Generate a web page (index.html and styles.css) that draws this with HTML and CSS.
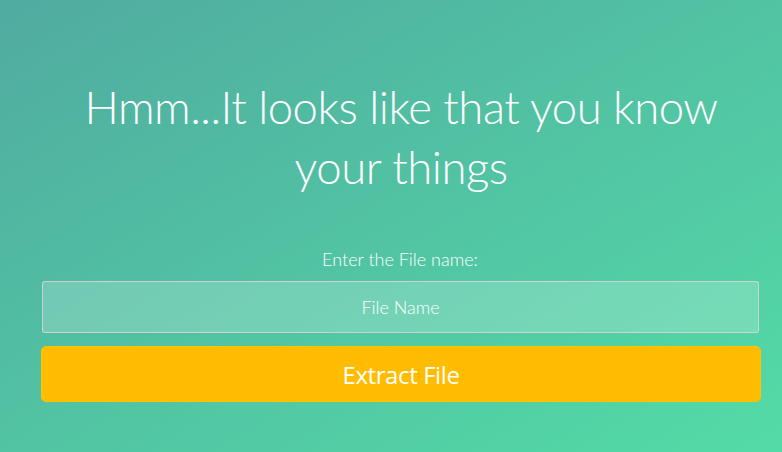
FILE: index.html
```html
<!DOCTYPE html>
<html lang="en">
<head>
<meta charset="utf-8">
<title>Extract File</title>
<link rel="stylesheet" href="styles.css">
</head>
<body>
<div class="wrapper">
  <div class="container">
    <h1 class="title">Hmm...It looks like that you know your things</h1>
    <form class="form">
      <label class="label" for="fname">Enter the File name:</label>
      <input class="input" id="fname" type="text" placeholder="File Name">
      <button class="button" type="button">Extract File</button>
    </form>
  </div>
</div>
</body>
</html>
```
FILE: styles.css
```css
* { box-sizing: border-box; }
html, body { margin: 0; padding: 0; height: 100%; }
body {
  font-family: "Lato", "Open Sans", sans-serif;
  color: #fff;
}
.wrapper {
  min-height: 452px;
  background: linear-gradient(to bottom right, #50aba0 0%, #53dba6 100%);
  overflow: hidden;
}
.container {
  padding: 77px 21px 0 41px;
  text-align: center;
}
.title {
  margin: 0 auto;
  width: 680px;
  font-weight: 300;
  font-size: 45.5px;
  line-height: 60px;
  letter-spacing: -0.5px;
}
.form {
  margin-top: 52px;
  display: flex;
  flex-direction: column;
  align-items: stretch;
}
.label {
  font-size: 18px;
  font-weight: 300;
  line-height: 20px;
  margin-bottom: 12px;
  padding-right: 2px;
}
.input {
  height: 52px;
  margin: 0 2px 0 1px;
  border: 1px solid rgba(230, 210, 220, 0.8);
  border-radius: 3px;
  background: rgba(255, 255, 255, 0.2);
  color: #fff;
  text-align: center;
  font-family: inherit;
  font-size: 18px;
  font-weight: 300;
  outline: none;
}
.input::placeholder { color: #fff; opacity: 1; }
.button {
  margin-top: 13px;
  height: 56px;
  border: 1px solid #ffc400;
  border-radius: 5px;
  background: #ffbc00;
  color: #fff;
  font-family: "Open Sans", sans-serif;
  font-size: 24px;
  letter-spacing: -0.4px;
}
```
